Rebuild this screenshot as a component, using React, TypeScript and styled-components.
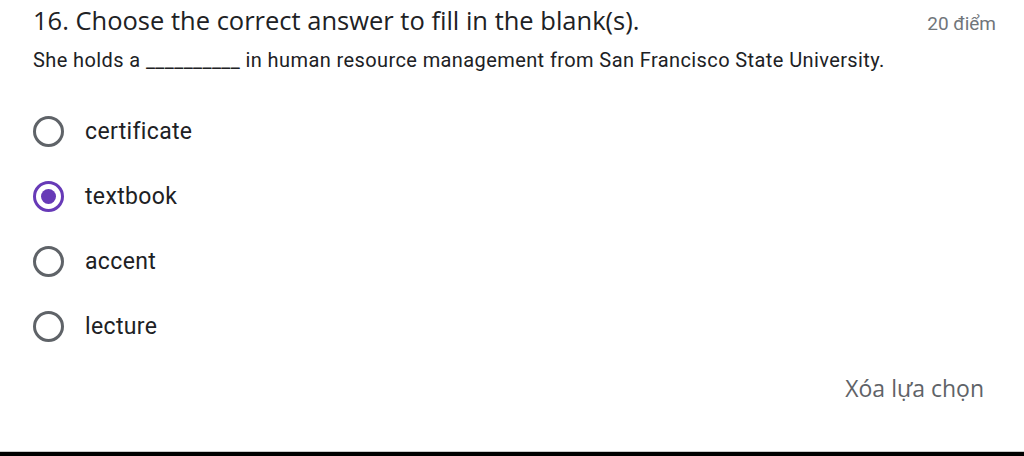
import styled, {createGlobalStyle} from "styled-components";

const GlobalStyle = createGlobalStyle`
  html, body {
    margin: 0;
    padding: 0;
    background: #fff;
  }
`

const Page = styled.div`
  width: 1024px;
  height: 456px;
  box-sizing: border-box;
  display: flex;
  flex-direction: column;
  border-bottom: 4px solid #000;
  box-shadow: inset 0 -1px 0 #c8c8c8;
  font-family: Roboto, "Liberation Sans", sans-serif;
`

const Card = styled.div`
  flex: 1;
  display: flex;
  flex-direction: column;
  padding: 4px 28px 0 33px;
`

const Header = styled.div`
  display: flex;
  justify-content: space-between;
  align-items: baseline;
`

const Title = styled.h1`
  margin: 0;
  font-family: "Open Sans", Roboto, sans-serif;
  font-weight: 400;
  font-size: 25.5px;
  line-height: 32px;
  color: #202124;
`

const Points = styled.span`
  font-size: 19px;
  color: #70757a;
`

const Question = styled.p`
  margin: 12px 0 0;
  font-size: 20px;
  line-height: 24px;
  letter-spacing: 0.4px;
  color: #202124;
`

const Options = styled.div`
  display: flex;
  flex-direction: column;
  gap: 33px;
  margin-top: 43px;
`

const Option = styled.label`
  display: flex;
  align-items: center;
  gap: 21px;
  height: 32px;
  font-size: 23px;
  letter-spacing: 0.35px;
  color: #202124;
`

const Radio = styled.span<{ $checked?: boolean }>`
  box-sizing: border-box;
  width: 31px;
  height: 31px;
  border-radius: 50%;
  border: 3px solid ${p => (p.$checked ? "#673ab7" : "#5f6368")};
  display: flex;
  align-items: center;
  justify-content: center;

  &::after {
    content: "";
    display: ${p => (p.$checked ? "block" : "none")};
    width: 15px;
    height: 15px;
    border-radius: 50%;
    background: #673ab7;
  }
`

const Footer = styled.div`
  display: flex;
  justify-content: flex-end;
  margin-top: 30px;
  padding-right: 12px;
`

const ClearButton = styled.span`
  font-family: "Open Sans", Roboto, sans-serif;
  font-size: 23px;
  color: #5f6368;
`

const answers = ["certificate", "textbook", "accent", "lecture"];

export default function App() {
    return (
        <>
            <GlobalStyle/>
            <Page>
                <Card>
                    <Header>
                        <Title>16. Choose the correct answer to fill in the blank(s).</Title>
                        <Points>20 điểm</Points>
                    </Header>
                    <Question>She holds a __________ in human resource management from San Francisco State University.</Question>
                    <Options>
                        {answers.map(a => (
                            <Option key={a}>
                                <Radio $checked={a === "textbook"}/>
                                {a}
                            </Option>
                        ))}
                    </Options>
                    <Footer>
                        <ClearButton>Xóa lựa chọn</ClearButton>
                    </Footer>
                </Card>
            </Page>
        </>
    );
}
